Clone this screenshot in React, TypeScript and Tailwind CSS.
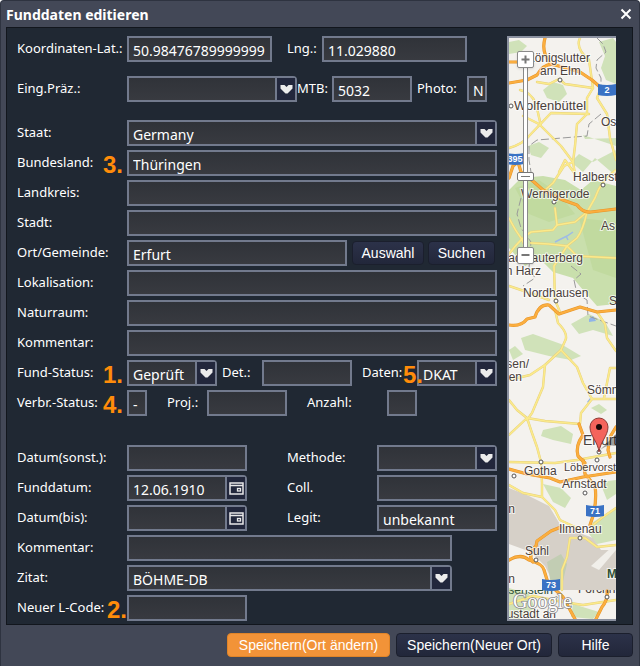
import { useId, useState, type ReactNode } from "react";

const roads = {
  major: [
    "M0 45 L18 42 L28 37 Q36 24 46 27 L71 34 L83 42 L91 49 L107 52",
    "M36 0 Q32 14 41 25",
    "M0 24 H18",
    "M0 140 L4 128 L9 124 L12 134 L25 144 L34 152 L54 162 L68 167 Q74 175 82 174 L107 171",
    "M0 287 Q12 289 18 281 L26 279 Q30 266 40 267 L50 276 L71 269 L88 274 L107 272",
    "M70 386 L74 397 Q66 408 69 418 L76 425",
    "M107 389 L101 399 L99 412 L101 419",
    "M0 431 L18 436 L41 440 L51 444 L74 439 L107 434",
    "M74 422 L76 436 L86 448 Q88 462 84 478 L81 487",
    "M52 489 L42 493 L28 503 L27 508 Q18 516 24 524",
    "M0 522 Q12 515 20 522 Q34 526 35 532 L39 545 L54 559 L66 581",
    "M98 553 Q99 562 93 569 L87 581",
  ],
  minor: [
    "M11 52 Q22 54 27 66 L32 88 L52 108 L64 124 L55 128 L44 145 L36 152",
    "M0 110 Q14 106 20 98 L42 75 L80 76",
    "M14 78 L30 86",
    "M71 0 Q66 10 80 22 L84 50 L78 60 L78 76 L68 86 L66 108 L64 124",
    "M28 44 L40 46 L50 41 L56 46 L84 50",
    "M91 52 L88 60 L98 76 L101 100 L107 122",
    "M107 132 Q92 142 86 160 L78 174 L66 184 L48 187 L46 170",
    "M0 216 Q12 200 22 194 L44 192 L48 187",
    "M78 174 Q74 192 68 200 L58 208 L68 218 L107 220",
    "M22 205 L40 206 L58 208 L45 228 L46 262 L51 274",
    "M0 180 Q6 192 12 200 L18 212",
    "M0 248 L18 254 L40 262",
    "M64 124 L66 136 L56 122 L50 134",
    "M46 272 L49 285 Q60 296 56 303 L52 312 L36 327 L34 349 L23 375 L18 382",
    "M52 312 L68 329 L74 345 L83 361 L107 361",
    "M0 342 L21 337 L36 327",
    "M0 362 L8 372 L18 380 L36 383 L71 386 L72 375 L83 361",
    "M0 397 L18 380 L23 395 L28 409 L32 424",
    "M88 274 L96 286 L98 300 L107 313",
    "M95 360 L101 330 L107 330",
    "M0 424 L46 425 L68 422 L107 415",
    "M32 424 L33 445 L33 459",
    "M0 447 L14 455 L33 459 L46 472 L51 482 L68 490",
    "M107 470 L94 479 L84 487",
    "M107 507 L88 509 L76 500 L61 500 L58 519 L53 532 L53 552",
    "M0 566 L24 558 L54 564 L74 567 L107 562",
  ],
};

const woods = [
  "M34 52 L44 44 L54 47 L58 56 L50 64 L38 60 Z",
  "M90 4 L104 0 L107 4 L107 46 L97 42 L92 30 L96 18 Z",
  "M19 108 L30 104 L40 110 L32 120 L22 117 Z",
  "M62 124 L70 116 L84 124 L107 112 L107 100 L76 101 L74 97 L107 108 L107 138 L86 120 L74 134 Z",
  "M0 152 L12 140 L34 138 L56 142 L72 152 L84 142 L107 148 L107 266 L88 268 L74 252 L64 240 L44 234 L30 220 L16 228 L0 210 Z",
  "M0 4 L10 2 L18 8 L12 14 L0 16 Z",
  "M12 300 L24 296 L52 306 L72 318 L62 322 L40 318 L16 312 Z",
  "M62 286 L80 276 L96 284 L104 298 L84 292 L70 296 Z",
  "M34 392 L52 388 L64 396 L62 406 L44 402 L32 398 Z",
  "M34 446 L52 450 L62 460 L56 470 L44 464 Z",
  "M92 444 L107 442 L107 456 L98 462 L94 452 Z",
  "M84 484 L107 470 L107 502 L88 506 L80 496 Z",
  "M0 500 L8 496 L16 504 L8 508 Z",
  "M0 550 L20 556 L26 570 L10 581 L0 581 Z",
  "M64 566 L90 574 L84 581 L62 579 Z",
  "M0 312 L6 308 L14 316 L4 322 Z",
  "M82 370 L90 366 L98 372 L92 376 Z",
];

const towns = [
  [51, 42], [2, 68], [94, 147], [45, 164], [47, 263], [90, 414], [88, 422],
  [32, 424], [5, 438], [76, 455], [71, 500], [27, 522], [98, 559],
];

const places = [
  { name: "Wolfenbüttel", x: 5, y: 72, size: 13 },
  { name: "am Elm", x: 31, y: 37 },
  { name: "Königslutter", x: 81, y: 24, end: true },
  { name: "Os", x: 92, y: 88 },
  { name: "Halberst", x: 64, y: 143 },
  { name: "Wernigerode", x: 12, y: 160 },
  { name: "As", x: 92, y: 192 },
  { name: "ad Lauterberg", x: 74, y: 224, end: true },
  { name: "n Harz", x: 32, y: 237, end: true },
  { name: "Nordhausen", x: 14, y: 259 },
  { name: "S", x: 100, y: 267 },
  { name: "sen/", x: 20, y: 330, end: true },
  { name: "en", x: 13, y: 343, end: true },
  { name: "Sömm", x: 78, y: 356 },
  { name: "Erfurt", x: 74, y: 407, size: 14 },
  { name: "Gotha", x: 15, y: 437 },
  { name: "Löbervorst", x: 55, y: 433, size: 11 },
  { name: "Arnstadt", x: 53, y: 450 },
  { name: "Ilmenau", x: 50, y: 495 },
  { name: "Suhl", x: 16, y: 517 },
  { name: "n", x: 6, y: 475, end: true },
  { name: "n", x: 6, y: 545, end: true },
  { name: "ustadt an", x: 47, y: 580, end: true },
];

const shields = [
  { no: "2", x: 88, y: 46 },
  { no: "395", x: -4, y: 115 },
  { no: "71", x: 76, y: 467 },
  { no: "73", x: 32, y: 541 },
];

function MapDrawing() {
  return (
    <svg
      viewBox="0 0 107 581"
      preserveAspectRatio="xMinYMin slice"
      className="block h-full w-full"
      fontFamily="Liberation Sans, Arial, sans-serif"
    >
      <rect width="107" height="581" fill="#f4f2ee" />
      {woods.map((d, i) => (
        <path key={i} d={d} fill={i === 4 ? "#c9dfac" : "#d0e2b9"} />
      ))}
      <path d="M6 150 L30 142 L50 156 L66 176 L40 184 L20 176 Z M70 180 L107 184 L107 240 L84 232 Z" fill="#c1da9f" />
      {/* Thüringer Wald */}
      <path d="M0 450 L20 458 L40 468 L52 488 L84 500 L92 512 L107 512 L107 552 L48 552 L36 528 L22 514 L0 506 Z" fill="#d6d0c8" />
      <path d="M38 524 L52 516 L58 526 L52 552 L42 546 Z" fill="#c2cdb3" />
      <path d="M82 528 L104 508 L107 512 L90 532 Z" fill="#f1efea" />
      <path d="M46 204 L54 200 L58 198 L64 194 M57 198 L59 202" stroke="#9dbbe6" strokeWidth="1.5" fill="none" />
      <path d="M80 281 L84 278 L87 283 L80 284 Z M78 364 L81 360 L81 366 Z" fill="#8fb4ea" />
      {/* Landesgrenzen */}
      <path
        d="M88 0 L94 6 L97 14 L88 22 L87 30 L92 40 L92 58 M92 76 L80 86 L78 98 L28 102 L20 108 L20 122 L22 134 M12 160 L8 176 L12 190 L22 204 L20 230 L26 240 L14 248 M62 228 L72 236 L65 242 L68 256 L78 262 L79 278 L107 288"
        stroke="#999"
        strokeWidth="1"
        strokeDasharray="8 3"
        fill="none"
      />
      <g fill="none" strokeLinejoin="round" strokeLinecap="round">
        {roads.minor.map((d) => <path key={d} d={d} stroke="#e6d07c" strokeWidth="2.4" />)}
        {roads.minor.map((d) => <path key={d} d={d} stroke="#fbea8b" strokeWidth="1.6" />)}
        {roads.major.map((d) => <path key={d} d={d} stroke="#e59428" strokeWidth="3.2" />)}
        {roads.major.map((d) => <path key={d} d={d} stroke="#fbae3f" strokeWidth="2.2" />)}
      </g>
      {towns.map(([x, y]) => (
        <circle key={`${x}-${y}`} cx={x} cy={y} r="2" fill="#fff" stroke="#555" strokeWidth="1" />
      ))}
      <g fill="#4a403b" stroke="#fff" strokeOpacity="0.7" strokeWidth="2" paintOrder="stroke">
        {places.map((p) => (
          <text key={p.name + p.y} x={p.x} y={p.y} fontSize={p.size ?? 12} textAnchor={p.end ? "end" : "start"}>
            {p.name}
          </text>
        ))}
        <text x="98" y="540" fontSize="12" fontWeight="bold" fill="#2f5037">M</text>
      </g>
      {/* Kachelrand: die Namen sind oben abgeschnitten */}
      <svg x="0" y="552" width="107" height="10" overflow="hidden" fill="#4a403b">
        <text x="44" y="4" fontSize="12" textAnchor="end" fill="#2f5037">isenstein</text>
        <text x="69" y="3" fontSize="12">Forchh</text>
      </svg>
      {shields.map((s) => (
        <g key={s.no}>
          <path d={`M${s.x + 1} ${s.y} Q${s.x + 10} ${s.y + 2} ${s.x + 19} ${s.y} V${s.y + 11} Q${s.x + 10} ${s.y + 13} ${s.x + 1} ${s.y + 11} Z`} fill="#3a72c4" />
          <text x={s.x + 10} y={s.y + 9} fontSize="9" fontWeight="bold" fill="#fff" textAnchor="middle">
            {s.no}
          </text>
        </g>
      ))}
      <text x="4" y="570" fontSize="20" fontFamily="Liberation Serif, serif" fill="#fff" stroke="#8b8b8b" strokeWidth="1.6" paintOrder="stroke">
        Google
      </text>
      {/* Marker */}
      <path d="M90 413 L107 396 L107 408 Q98 406 90 413 Z" fill="#000" opacity="0.35" />
      <path d="M90 414 C89 404 81 398 81 389 A9 9 0 0 1 99 389 C99 398 91 404 90 414 Z" fill="#f4645c" stroke="#8e3a35" strokeWidth="1" />
      <circle cx="90" cy="389" r="3" fill="#1a0908" />
    </svg>
  );
}

function FundMap() {
  const [zoom, setZoom] = useState(11);
  const knob =
    "absolute left-2 flex size-[17px] items-center justify-center rounded-xs border border-[#8a8a8a] bg-white text-[#777] shadow-sm";

  return (
    <div className="relative w-[109px] shrink-0 overflow-hidden border-y-2 border-l-2 border-[#8b91a0]">
      <div className="absolute inset-0">
        <MapDrawing />
      </div>
      <div className="absolute top-7 left-[14px] h-[184px] w-[5px] border-x border-[#8a8a8a] bg-white" />
      <input
        type="range"
        aria-label="Zoom"
        min={0}
        max={18}
        value={zoom}
        onChange={(e) => setZoom(Number(e.target.value))}
        className="absolute top-[30px] left-2 h-[179px] w-[17px] appearance-none bg-transparent [writing-mode:vertical-lr] [&::-webkit-slider-thumb]:h-[9px] [&::-webkit-slider-thumb]:w-[17px] [&::-webkit-slider-thumb]:appearance-none [&::-webkit-slider-thumb]:rounded-xs [&::-webkit-slider-thumb]:border [&::-webkit-slider-thumb]:border-[#777] [&::-webkit-slider-thumb]:bg-[linear-gradient(#777,#777)] [&::-webkit-slider-thumb]:bg-[length:9px_1px] [&::-webkit-slider-thumb]:bg-center [&::-webkit-slider-thumb]:bg-no-repeat [&::-webkit-slider-thumb]:bg-white"
      />
      <button type="button" aria-label="Vergrößern" onClick={() => setZoom(Math.max(0, zoom - 1))} className={`${knob} top-[13px]`}>
        <svg width="9" height="9" viewBox="0 0 9 9" stroke="currentColor" strokeWidth="2">
          <path d="M0.5 4.5 H8.5 M4.5 0.5 V8.5" />
        </svg>
      </button>
      <button type="button" aria-label="Verkleinern" onClick={() => setZoom(Math.min(18, zoom + 1))} className={`${knob} top-[209px]`}>
        <svg width="9" height="9" viewBox="0 0 9 9" stroke="currentColor" strokeWidth="2">
          <path d="M0.5 4 H8.5" />
        </svg>
      </button>
    </div>
  );
}

const box = "h-[26px] border-2 border-[#727a8d] bg-linear-to-b from-[#303339] to-[#383a40]";
const entry = "h-full w-full min-w-0 appearance-none bg-transparent pt-0.5 pl-1 text-sm leading-5 text-white outline-none";

type FieldProps = {
  label: string;
  value?: string;
  kind?: "text" | "select" | "date";
  labelClass?: string;
  className?: string;
  mark?: ReactNode;
};

function Field({ label, value = "", kind = "text", labelClass = "w-[110px]", className = "flex-1", mark }: FieldProps) {
  const id = useId();
  return (
    <>
      <div className={`relative shrink-0 text-[13px] leading-6 whitespace-nowrap ${labelClass}`}>
        <label htmlFor={id}>{label}</label>
        {mark}
      </div>
      {kind === "text" && (
        <div className={`${box} ${className}`}>
          <input id={id} defaultValue={value} className={entry} />
        </div>
      )}
      {kind === "select" && (
        <div className={`${box} relative rounded-tr-sm ${className}`}>
          <select id={id} defaultValue={value} className={entry}>
            <option className="bg-[#36383f]">{value}</option>
          </select>
          <span className="pointer-events-none absolute inset-y-0 right-0 flex w-[20px] items-center justify-center border-l-2 border-[#727a8d] bg-[#22273c]">
            <svg width="13" height="10" viewBox="0 0 13 10">
              <path d="M0.5 1 H4.5 L6.5 3 L8.5 1 H12.5 V4.5 L7.5 9.5 H5.5 L0.5 4.5 Z" fill="#ececec" />
            </svg>
          </span>
        </div>
      )}
      {kind === "date" && (
        <div className={`${box} flex rounded-tr-sm ${className}`}>
          <input id={id} defaultValue={value} className={entry} />
          <button
            type="button"
            aria-label={`${label} Kalender`}
            className="flex w-[20px] shrink-0 items-center justify-center border-l-2 border-[#727a8d] bg-[#22273c]"
          >
            <svg width="15" height="13" viewBox="0 0 15 13" fill="none">
              <rect x="1" y="1" width="13" height="11" stroke="#e8e8e8" strokeWidth="1.5" />
              <path d="M1 3.5 H14" stroke="#e8e8e8" strokeWidth="1.5" />
              <rect x="8.5" y="6.5" width="3" height="2.5" stroke="#e8e8e8" strokeWidth="1.3" />
            </svg>
          </button>
        </div>
      )}
    </>
  );
}

function Mark({ children, className = "right-1" }: { children: string; className?: string }) {
  return (
    <span className={`pointer-events-none absolute top-0.5 z-10 font-['Liberation_Sans',sans-serif] text-2xl leading-[26px] font-bold text-[#ff8c0a] ${className}`}>
      {children}
    </span>
  );
}

function Row({ children }: { children: ReactNode }) {
  return <div className="flex h-[26px]">{children}</div>;
}

const button = "rounded-sm border font-['Liberation_Sans',sans-serif] text-sm whitespace-nowrap text-white";
const dark = "border-[#1b1f2d] bg-linear-to-b from-[#2c3249] to-[#22273a]";

export default function App() {
  return (
    <div className="flex min-h-screen flex-col rounded-t-sm border-x border-t border-[#2e3340] bg-[#434857] pr-1.5 pl-[5px] font-['Noto_Sans','DejaVu_Sans',sans-serif] text-white">
      <header className="flex h-[26px] shrink-0 items-center justify-between pr-px">
        <h1 className="pt-0.5 text-sm font-bold">Funddaten editieren</h1>
        <button type="button" aria-label="Schließen">
          <svg width="12" height="12" viewBox="0 0 12 12" stroke="#fff" strokeWidth="2">
            <path d="M1.5 1.5 L10.5 10.5 M10.5 1.5 L1.5 10.5" />
          </svg>
        </button>
      </header>

      <main className="flex gap-2.5 border border-[#12161d] bg-[#202833] pt-2 pr-4 pb-[3px] pl-2.5">
        <form id="fund" onSubmit={(e) => e.preventDefault()} className="flex min-w-0 flex-1 flex-col">
          <Row>
            <Field label="Koordinaten-Lat.:" value="50.98476789999999" className="w-[145px]" />
            <Field label="Lng.:" value="11.029880" labelClass="ml-[15px] w-[35px]" className="w-[145px]" />
          </Row>
          <div className="mt-3.5 mb-[18px]">
            <Row>
              <Field label="Eing.Präz.:" kind="select" className="w-[170px]" />
              <Field label="MTB:" value="5032" labelClass="w-[35px]" className="w-20" />
              <Field label="Photo:" value="N" labelClass="w-[55px] pl-[5px]" className="w-5" />
            </Row>
          </div>

          <div className="flex flex-col gap-1">
            <Row>
              <Field label="Staat:" value="Germany" kind="select" />
            </Row>
            <Row>
              <Field label="Bundesland:" value="Thüringen" mark={<Mark>3.</Mark>} />
            </Row>
            <Row>
              <Field label="Landkreis:" />
            </Row>
            <Row>
              <Field label="Stadt:" />
            </Row>
            <Row>
              <Field label="Ort/Gemeinde:" value="Erfurt" />
              <div className="ml-[5px] flex items-center gap-1 pr-0.5">
                <button type="button" className={`${button} ${dark} h-6 w-[72px]`}>Auswahl</button>
                <button type="button" className={`${button} ${dark} h-6 w-[67px]`}>Suchen</button>
              </div>
            </Row>
            <Row>
              <Field label="Lokalisation:" />
            </Row>
            <Row>
              <Field label="Naturraum:" />
            </Row>
            <Row>
              <Field label="Kommentar:" />
            </Row>
            <Row>
              <Field label="Fund-Status:" value="Geprüft" kind="select" className="w-[90px]" mark={<Mark>1.</Mark>} />
              <Field label="Det.:" labelClass="w-[45px] pl-[5px]" className="w-[90px]" />
              <Field
                label="Daten:"
                value="DKAT"
                kind="select"
                labelClass="w-[65px] pl-2.5"
                className="w-20"
                mark={<Mark className="-right-1.5">5.</Mark>}
              />
            </Row>
            <Row>
              <Field label="Verbr.-Status:" value="-" className="w-5" mark={<Mark>4.</Mark>} />
              <Field label="Proj.:" labelClass="w-[60px] pl-5" className="w-20" />
              <Field label="Anzahl:" labelClass="w-[100px] pl-5" className="w-[30px]" />
            </Row>
          </div>

          <div className="mt-[29px] flex flex-col gap-1">
            <Row>
              <Field label="Datum(sonst.):" className="w-[120px]" />
              <Field label="Methode:" kind="select" labelClass="ml-10 w-[90px]" className="w-[120px]" />
            </Row>
            <Row>
              <Field label="Funddatum:" value="12.06.1910" kind="date" className="w-[120px]" />
              <Field label="Coll." labelClass="ml-10 w-[90px]" className="w-[120px]" />
            </Row>
            <Row>
              <Field label="Datum(bis):" kind="date" className="w-[120px]" />
              <Field label="Legit:" value="unbekannt" labelClass="ml-10 w-[90px]" className="w-[120px]" />
            </Row>
            <Row>
              <Field label="Kommentar:" className="w-[325px]" />
            </Row>
            <Row>
              <Field label="Zitat:" value="BÖHME-DB" kind="select" className="w-[325px]" />
            </Row>
            <Row>
              <Field label="Neuer L-Code:" className="w-[120px]" mark={<Mark className="right-0">2.</Mark>} />
            </Row>
          </div>
        </form>
        <FundMap />
      </main>

      <footer className="flex justify-end gap-1.5 py-2">
        <button type="submit" form="fund" className={`${button} h-6 w-[163px] border-[#e08428] bg-[#f29338]`}>
          Speichern(Ort ändern)
        </button>
        <button type="button" className={`${button} ${dark} h-6 w-[156px]`}>Speichern(Neuer Ort)</button>
        <button type="button" className={`${button} ${dark} h-6 w-[75px]`}>Hilfe</button>
      </footer>
    </div>
  );
}
